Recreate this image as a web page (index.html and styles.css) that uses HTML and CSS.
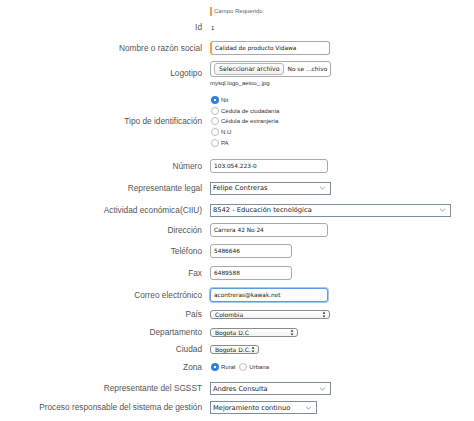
FILE: index.html
```html
<!DOCTYPE html>
<html lang="es">
<head>
<meta charset="utf-8">
<title>Empresa</title>
<link rel="stylesheet" href="styles.css">
</head>
<body>
<form class="form">
  <div class="label"></div>
  <div class="field"><span class="req">Campo Requerido</span></div>

  <div class="label">Id</div>
  <div class="field"><span class="val">1</span></div>

  <label class="label">Nombre o razón social</label>
  <div class="field"><input class="txt w120 required" type="text" value="Calidad de producto Vidawa"></div>

  <label class="label">Logotipo</label>
  <div class="field col">
    <div class="file w121">
      <span class="file-btn">Seleccionar archivo</span>
      <span class="file-name">No se ...chivo</span>
    </div>
    <span class="file-cur">mysql.logo_aeiou_.jpg</span>
  </div>

  <div class="label">Tipo de identificación</div>
  <div class="field col">
    <label class="opt"><input class="radio" type="radio" name="tipo" checked><span>Nit</span></label>
    <label class="opt"><input class="radio" type="radio" name="tipo"><span>Cédula de ciudadanía</span></label>
    <label class="opt"><input class="radio" type="radio" name="tipo"><span>Cédula de extranjería</span></label>
    <label class="opt"><input class="radio" type="radio" name="tipo"><span>N.U</span></label>
    <label class="opt"><input class="radio" type="radio" name="tipo"><span>PA</span></label>
  </div>

  <label class="label">Número</label>
  <div class="field"><input class="txt w118" type="text" value="103.054.223-0"></div>

  <label class="label">Representante legal</label>
  <div class="field">
    <div class="sel w121"><select class="sel-in"><option>Felipe Contreras</option></select><svg class="chev" viewBox="0 0 8 5" width="7" height="4"><path d="M1 1l3 3 3-3" fill="none" stroke="#7a7a7a" stroke-width="0.9"/></svg></div>
  </div>

  <label class="label">Actividad económica(CIIU)</label>
  <div class="field">
    <div class="sel w241"><select class="sel-in"><option>8542 - Educación tecnológica</option></select><svg class="chev" viewBox="0 0 8 5" width="7" height="4"><path d="M1 1l3 3 3-3" fill="none" stroke="#7a7a7a" stroke-width="0.9"/></svg></div>
  </div>

  <label class="label">Dirección</label>
  <div class="field"><input class="txt w118" type="text" value="Carrera 42 No 24"></div>

  <label class="label">Teléfono</label>
  <div class="field"><input class="txt w82" type="text" value="5486646"></div>

  <label class="label">Fax</label>
  <div class="field"><input class="txt w82" type="text" value="6489588"></div>

  <label class="label">Correo electrónico</label>
  <div class="field"><input class="txt w118 focus" type="text" value="acontreras@kawak.net"></div>

  <label class="label">País</label>
  <div class="field">
    <div class="msel w120"><select class="msel-in"><option>Colombia</option></select><svg class="updown" viewBox="0 0 4 8" width="4" height="7"><path d="M2 0.5L3.6 3H0.4zM2 7.5L3.6 5H0.4z" fill="#333"/></svg></div>
  </div>

  <label class="label">Departamento</label>
  <div class="field">
    <div class="msel w88"><select class="msel-in"><option>Bogota D.C</option></select><svg class="updown" viewBox="0 0 4 8" width="4" height="7"><path d="M2 0.5L3.6 3H0.4zM2 7.5L3.6 5H0.4z" fill="#333"/></svg></div>
  </div>

  <label class="label">Ciudad</label>
  <div class="field">
    <div class="msel w49"><select class="msel-in"><option>Bogota D.C.</option></select><svg class="updown" viewBox="0 0 4 8" width="4" height="7"><path d="M2 0.5L3.6 3H0.4zM2 7.5L3.6 5H0.4z" fill="#333"/></svg></div>
  </div>

  <div class="label">Zona</div>
  <div class="field row">
    <label class="opt"><input class="radio" type="radio" name="zona" checked><span>Rural</span></label>
    <label class="opt"><input class="radio" type="radio" name="zona"><span>Urbana</span></label>
  </div>

  <label class="label">Representante del SGSST</label>
  <div class="field">
    <div class="sel w121"><select class="sel-in"><option>Andres Consulta</option></select><svg class="chev" viewBox="0 0 8 5" width="7" height="4"><path d="M1 1l3 3 3-3" fill="none" stroke="#7a7a7a" stroke-width="0.9"/></svg></div>
  </div>

  <label class="label">Proceso responsable del sistema de gestión</label>
  <div class="field">
    <div class="sel w107"><select class="sel-in"><option>Mejoramiento continuo</option></select><svg class="chev" viewBox="0 0 8 5" width="7" height="4"><path d="M1 1l3 3 3-3" fill="none" stroke="#7a7a7a" stroke-width="0.9"/></svg></div>
  </div>
</form>
</body>
</html>
```

FILE: styles.css
```css
* { box-sizing: border-box; }

body {
  margin: 0;
  background: #fff;
  font-family: "Liberation Sans", Arial, sans-serif;
  color: #333;
}

/* label column | field column; each row's track is sized to the row's height plus its spacing */
.form {
  display: grid;
  grid-template-columns: 202px auto;
  grid-template-rows: 11px 21px 20px 31px 65px 24px 20px 24px 16px 26px 18px 26px 13px 23px 11px 24px 19px 19px;
  column-gap: 8px;
  align-items: center;
  padding-top: 6px;
}

.label {
  text-align: right;
  font-size: 8.3px;
  line-height: 9px;
  color: #555;
}

.field {
  justify-self: start;
  display: flex;
  align-items: center;
}

.field.col {
  flex-direction: column;
  align-items: flex-start;
}

.field.row {
  gap: 3px;
}

.req {
  border-left: 2px solid #f4a236;
  padding-left: 2px;
  font-size: 6px;
  line-height: 9px;
  color: #666;
}

.val {
  font-size: 6px;
  line-height: 8px;
  color: #222;
  padding-left: 1px;
}

/* text inputs */
.txt {
  height: 14px;
  margin: 0;
  padding: 0 0 0 3px;
  border: 1px solid #a9a9a9;
  border-radius: 3px;
  background: #fff;
  font-family: "DejaVu Sans", Verdana, sans-serif;
  font-size: 5.8px;
  color: #222;
  outline: none;
}

.txt.required {
  border-left: 2px solid #f4a236;
}

.txt.focus {
  border: 1px solid #5d9be0;
  box-shadow: 0 0 0 1px #a8c9ee;
}

.w49 { width: 49px; }
.w82 { width: 82px; }
.w88 { width: 88px; }
.w107 { width: 107px; }
.w118 { width: 118px; }
.w120 { width: 120px; }
.w121 { width: 121px; }
.w241 { width: 241px; }

/* file input */
.file {
  height: 16px;
  display: flex;
  align-items: center;
  gap: 3px;
  padding: 0 3px;
  border: 1px solid #a9a9a9;
  border-radius: 3px;
  background: #fff;
  font-family: "DejaVu Sans", Verdana, sans-serif;
}

.file-btn {
  height: 12px;
  display: flex;
  align-items: center;
  padding: 0 4px;
  border: 1px solid #b5b5b5;
  border-radius: 3px;
  background: linear-gradient(#fff, #f1f1f1);
  font-size: 6.2px;
  color: #222;
  white-space: nowrap;
}

.file-name {
  font-size: 5.9px;
  color: #222;
  white-space: nowrap;
}

.file-cur {
  margin-top: 2px;
  font-size: 6px;
  line-height: 8px;
  color: #333;
}

/* radios */
.opt {
  display: flex;
  align-items: center;
  gap: 2px;
  height: 10.8px;
  font-size: 6px;
  color: #333;
}

.radio {
  -webkit-appearance: none;
  appearance: none;
  margin: 0 0 0 1px;
  width: 8px;
  height: 8px;
  border: 1px solid #bdbdbd;
  border-radius: 50%;
  background: #fff;
}

.radio:checked {
  border: none;
  background: radial-gradient(circle, #fff 0 1.2px, #2f7de1 1.6px);
}

/* large selects */
.sel {
  height: 13px;
  display: flex;
  align-items: center;
  padding-right: 4px;
  border: 1px solid #7f8c99;
  background: #fff;
}

.sel-in, .msel-in {
  -webkit-appearance: none;
  appearance: none;
  flex: 1;
  min-width: 0;
  height: 100%;
  margin: 0;
  border: 0;
  padding: 0 0 0 2px;
  background: transparent;
  font-family: "DejaVu Sans", Verdana, sans-serif;
  font-size: 6.7px;
  color: #222;
  outline: none;
}

.chev {
  flex: none;
}

/* small native-style selects */
.msel {
  height: 9px;
  display: flex;
  align-items: center;
  padding-right: 3px;
  border: 1px solid #8a8a8a;
  border-radius: 3px;
  background: linear-gradient(#fff, #f3f3f3);
}

.msel-in {
  font-size: 6px;
  padding-left: 4px;
  line-height: 7px;
}

.updown {
  flex: none;
}
```
